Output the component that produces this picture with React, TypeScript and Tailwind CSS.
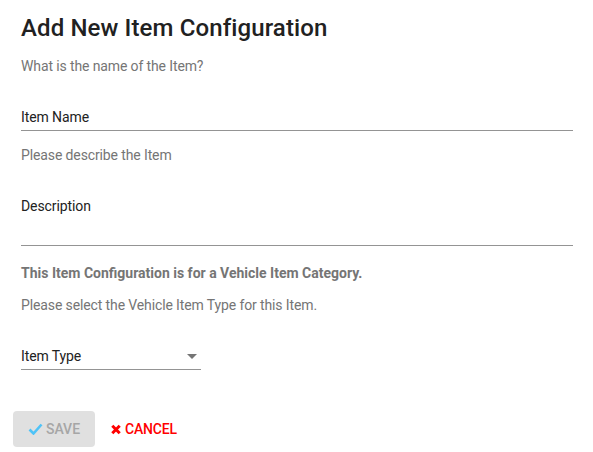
const font = { fontFamily: "Roboto, 'Liberation Sans', sans-serif" };

function Field({ label, tall }: { label: string; tall?: boolean }) {
  return (
    <div
      className={`border-b border-[#949494] text-sm leading-5 tracking-[-0.1px] text-[#222] ${tall ? "pb-[29px]" : "pb-[3px]"}`}
    >
      {label}
    </div>
  );
}

export default function App() {
  return (
    <div className="w-[593px] h-[452px] bg-white pl-[21px] pr-[20px] overflow-hidden" style={font}>
      <h1 className="pt-[12px] text-2xl leading-8 font-medium tracking-[0.12px] text-[#212121]">
        Add New Item Configuration
      </h1>
      <p className="mt-[12px] text-sm leading-5 tracking-[-0.12px] text-[#757575]">What is the name of the Item?</p>

      <div className="mt-[31px]">
        <Field label="Item Name" />
      </div>

      <p className="mt-[14px] text-sm leading-5 tracking-[-0.12px] text-[#757575]">Please describe the Item</p>

      <div className="mt-[31px]">
        <Field label="Description" tall />
      </div>

      <p className="mt-[17px] text-sm leading-5 font-bold text-[#757575]">
        This Item Configuration is for a Vehicle Item Category.
      </p>
      <p className="mt-[12px] text-sm leading-5 tracking-[-0.12px] text-[#757575]">
        Please select the Vehicle Item Type for this Item.
      </p>

      <div className="mt-[31px] w-[180px] flex items-center justify-between border-b border-[#949494] pb-[3px] text-sm leading-5 tracking-[-0.1px] text-[#222]">
        <span>Item Type</span>
        <svg width="24" height="20" viewBox="0 2 24 20" className="-mr-[3px]">
          <path d="M7 10l5 5 5-5z" fill="#757575" />
        </svg>
      </div>

      <div className="mt-[41px] -ml-2 flex items-center gap-[8px]">
        <button className="h-[36px] w-[82px] rounded bg-[#e0e0e0] flex items-center justify-center gap-[3px] text-sm font-medium text-[#a6a6a6]">
          <svg width="15" height="12" viewBox="0 0 15 12">
            <path d="M1.5 6.5l4 4L13.5 1.5" stroke="#4fc3f7" strokeWidth="2.6" fill="none" />
          </svg>
          SAVE
        </button>
        <button className="h-[36px] px-2 flex items-center gap-[4px] text-sm font-medium tracking-[-0.2px] text-[#ff0000]">
          <svg width="10" height="11" viewBox="0 0 10 11">
            <path d="M1.3 1.8l7.4 7.4M8.7 1.8l-7.4 7.4" stroke="#ff0000" strokeWidth="3" />
          </svg>
          CANCEL
        </button>
      </div>
    </div>
  );
}
